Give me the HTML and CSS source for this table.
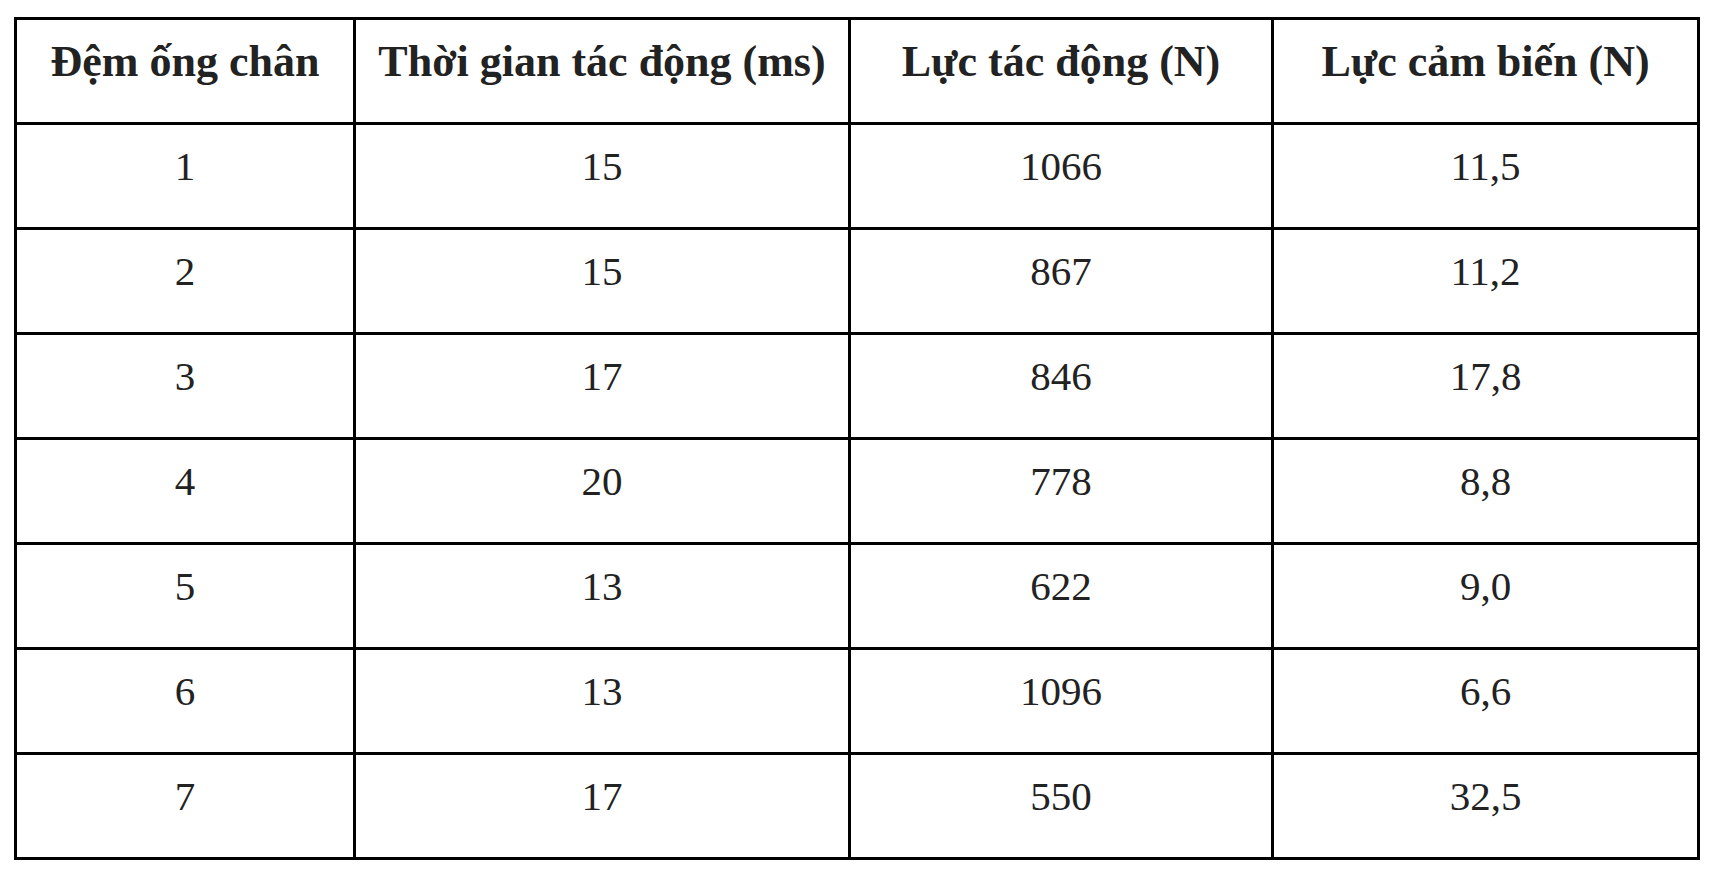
FILE: index.html
```html
<!DOCTYPE html>
<html lang="vi">
<head>
<meta charset="utf-8">
<title>Bảng lực tác động</title>
<link rel="stylesheet" href="styles.css">
</head>
<body>
<table class="data">
  <colgroup>
    <col class="c1"><col class="c2"><col class="c3"><col class="c4">
  </colgroup>
  <thead>
    <tr><th>Đệm ống chân</th><th>Thời gian tác động (ms)</th><th>Lực tác động (N)</th><th>Lực cảm biến (N)</th></tr>
  </thead>
  <tbody>
    <tr><td>1</td><td>15</td><td>1066</td><td>11,5</td></tr>
    <tr><td>2</td><td>15</td><td>867</td><td>11,2</td></tr>
    <tr><td>3</td><td>17</td><td>846</td><td>17,8</td></tr>
    <tr><td>4</td><td>20</td><td>778</td><td>8,8</td></tr>
    <tr><td>5</td><td>13</td><td>622</td><td>9,0</td></tr>
    <tr><td>6</td><td>13</td><td>1096</td><td>6,6</td></tr>
    <tr><td>7</td><td>17</td><td>550</td><td>32,5</td></tr>
  </tbody>
</table>
</body>
</html>
```

FILE: styles.css
```css
html, body {
  margin: 0;
  padding: 0;
  background: #ffffff;
}
body {
  padding: 17px 0 0 14px;
  font-family: "Liberation Serif", "Times New Roman", serif;
  color: #222222;
}
.data {
  border-collapse: collapse;
  table-layout: fixed;
  width: 1683px;
}
.c1 { width: 339px; }
.c2 { width: 495px; }
.c3 { width: 423px; }
.c4 { width: 426px; }
.data th,
.data td {
  border: 3px solid #000000;
  height: 105px;
  box-sizing: border-box;
  padding: 0 4px 20px 4px;
  text-align: center;
  vertical-align: middle;
}
.data th {
  font-size: 44px;
  font-weight: bold;
}
.data td {
  font-size: 41px;
  font-weight: normal;
}
```
